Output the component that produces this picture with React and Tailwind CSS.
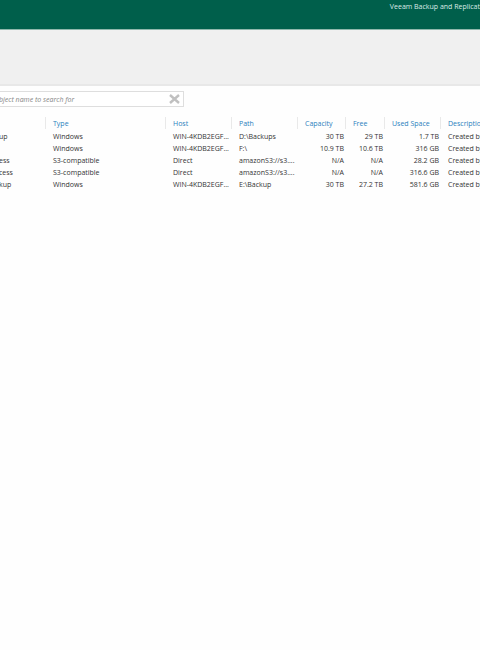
import React from "react";

const columns = [
  { key: "name", label: "", width: "w-[45px]" },
  { key: "type", label: "Type", width: "w-[120px]" },
  { key: "host", label: "Host", width: "w-[66px]" },
  { key: "path", label: "Path", width: "w-[66px]" },
  { key: "capacity", label: "Capacity", width: "w-[48px]", right: true },
  { key: "free", label: "Free", width: "w-[39px]", right: true },
  { key: "used", label: "Used Space", width: "w-[56px]", right: true },
  { key: "description", label: "Descriptio", width: "" },
];

const repositories = [
  { name: "up", type: "Windows", host: "WIN-4KDB2EGF...", path: "D:\\Backups", capacity: "30 TB", free: "29 TB", used: "1.7 TB", description: "Created by" },
  { name: "", type: "Windows", host: "WIN-4KDB2EGF...", path: "F:\\", capacity: "10.9 TB", free: "10.6 TB", used: "316 GB", description: "Created by" },
  { name: "ess", type: "S3-compatible", host: "Direct", path: "amazonS3://s3....", capacity: "N/A", free: "N/A", used: "28.2 GB", description: "Created by" },
  { name: "cess", type: "S3-compatible", host: "Direct", path: "amazonS3://s3....", capacity: "N/A", free: "N/A", used: "316.6 GB", description: "Created by" },
  { name: "kup", type: "Windows", host: "WIN-4KDB2EGF...", path: "E:\\Backup", capacity: "30 TB", free: "27.2 TB", used: "581.6 GB", description: "Created by" },
];

const TitleBar = () => (
  <header className="flex h-[30px] justify-end border-b border-[#8fb8ac] bg-[#005f4b] pt-0.5">
    <h1 className="whitespace-nowrap text-[7px] leading-[10px] text-[#dcebe7]">
      Veeam Backup and Replicat
    </h1>
  </header>
);

const SearchBox = () => (
  <div className="flex h-4 w-[184px] items-center border border-l-0 border-[#dedede] bg-white">
    <input
      type="text"
      aria-label="Search"
      placeholder="bject name to search for"
      className="-ml-px h-full min-w-0 flex-1 bg-transparent text-[7px] italic text-[#444] outline-none placeholder:text-[#858585]"
    />
    <button type="button" aria-label="Clear search" className="mr-[3px] flex shrink-0 items-center">
      <svg width="11" height="10" viewBox="0 0 11 10" stroke="#c0c0c0" strokeWidth="2.4">
        <path d="M1 1l9 8M10 1L1 9" />
      </svg>
    </button>
  </div>
);

const RepositoryTable = () => (
  <table className="w-full table-fixed text-left text-[7px]">
    <thead>
      <tr>
        {columns.map((col) => (
          <th key={col.key} className={`p-0 pb-0.5 font-normal text-[#2a80bd] ${col.width}`}>
            <div
              className={`h-3 whitespace-nowrap leading-[13px] ${
                col.key === "name" ? "" : "border-l border-[#e9e9e9] pl-[7px]"
              }`}
            >
              {col.label}
            </div>
          </th>
        ))}
      </tr>
    </thead>
    <tbody>
      {repositories.map((repo, i) => (
        <tr key={i} className="h-3">
          {columns.map((col) => (
            <td key={col.key} className="p-0 text-[#333]">
              <div
                className={`h-3 whitespace-nowrap leading-3 ${
                  col.right ? "pr-px text-right" : col.key === "name" ? "-ml-px" : "pl-2"
                }`}
              >
                {repo[col.key]}
              </div>
            </td>
          ))}
        </tr>
      ))}
    </tbody>
  </table>
);

const App = () => {
  return (
    <div className="min-h-screen overflow-hidden bg-[#fefefe] font-['Open_Sans','Noto_Sans',sans-serif]">
      <TitleBar />
      <div className="h-14 border-b-2 border-[#e8e8e8] bg-[#f0f0f0]" />
      <main className="pt-[5px]">
        <SearchBox />
        <div className="pt-[10px]">
          <RepositoryTable />
        </div>
      </main>
    </div>
  );
};

export default App;
